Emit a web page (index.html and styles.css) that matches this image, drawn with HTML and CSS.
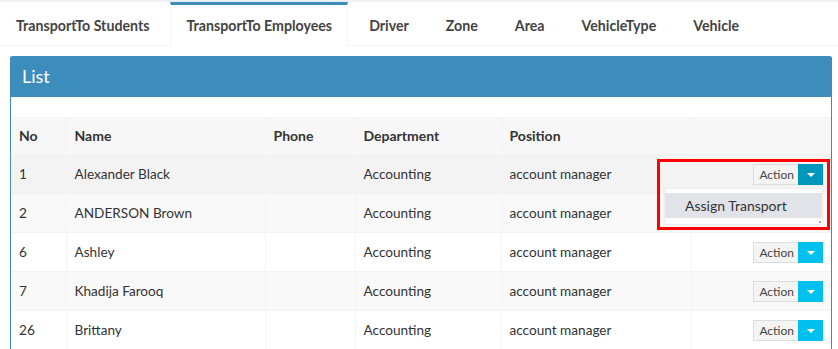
FILE: index.html
```html
<!DOCTYPE html>
<html>
<head>
<meta charset="utf-8">
<link rel="stylesheet" href="styles.css">
</head>
<body>
<div class="topstrip"></div>
<ul class="tabs">
  <li class="tab">TransportTo Students</li>
  <li class="tab active">TransportTo Employees</li>
  <li class="tab">Driver</li>
  <li class="tab">Zone</li>
  <li class="tab">Area</li>
  <li class="tab">VehicleType</li>
  <li class="tab">Vehicle</li>
</ul>
<div class="panel">
  <div class="panel-head">List</div>
  <div class="panel-tools"></div>
  <table class="grid">
    <colgroup>
      <col class="c-no"><col class="c-name"><col class="c-phone"><col class="c-dept"><col class="c-pos"><col class="c-act">
    </colgroup>
    <thead>
      <tr><th>No</th><th>Name</th><th>Phone</th><th>Department</th><th>Position</th><th></th></tr>
    </thead>
    <tbody>
      <tr class="hover">
        <td>1</td><td>Alexander Black</td><td></td><td>Accounting</td><td>account manager</td>
        <td class="act">
          <div class="btn-wrap">
            <div class="btn-group"><span class="btn-main">Action</span><span class="btn-caret open"><span class="caret"></span></span></div>
            <div class="menu"><div class="menu-item">Assign Transport</div><span class="grip"></span></div>
            <div class="highlight"></div>
          </div>
        </td>
      </tr>
      <tr class="odd">
        <td>2</td><td>ANDERSON Brown</td><td></td><td>Accounting</td><td>account manager</td><td class="act"></td>
      </tr>
      <tr>
        <td>6</td><td>Ashley</td><td></td><td>Accounting</td><td>account manager</td>
        <td class="act"><div class="btn-group"><span class="btn-main">Action</span><span class="btn-caret"><span class="caret"></span></span></div></td>
      </tr>
      <tr class="odd">
        <td>7</td><td>Khadija Farooq</td><td></td><td>Accounting</td><td>account manager</td>
        <td class="act"><div class="btn-group"><span class="btn-main">Action</span><span class="btn-caret"><span class="caret"></span></span></div></td>
      </tr>
      <tr>
        <td>26</td><td>Brittany</td><td></td><td>Accounting</td><td>account manager</td>
        <td class="act"><div class="btn-group"><span class="btn-main">Action</span><span class="btn-caret"><span class="caret"></span></span></div></td>
      </tr>
    </tbody>
  </table>
</div>
</body>
</html>
```
FILE: styles.css
```css
* { box-sizing: border-box; }
html, body { margin: 0; padding: 0; background: #fff; overflow: hidden; }
body { font-family: "Lato", "Liberation Sans", sans-serif; color: #333; font-size: 14px; }
.topstrip { height: 2px; background: #ecf0f5; }
.tabs { list-style: none; margin: 0; padding: 0; display: flex; border-bottom: 1px solid #f4f4f4; }
.tab { font-weight: bold; font-size: 14.2px; color: #444; line-height: 20px; padding: 11px 15px 9px; margin-right: 5px; border-top: 3px solid transparent; border-left: 1px solid transparent; border-right: 1px solid transparent; margin-bottom: -1px; white-space: nowrap; }
.tab.active { border-top-color: #3c8dbc; border-left-color: #f4f4f4; border-right-color: #f4f4f4; border-bottom: 1px solid #fff; }
.panel { margin: 10px 6px 0 10px; border-left: 1px solid #3c8dbc; border-right: 1px solid #3c8dbc; border-radius: 3px 3px 0 0; }
.panel-head { background: #3c8dbc; color: #fff; font-size: 18px; height: 41px; line-height: 41px; border-radius: 3px 3px 0 0; margin: 0 -1px; padding-left: 12px; }
.panel-tools { height: 20px; }
.grid { width: 100%; border-collapse: collapse; table-layout: fixed; }
.c-no { width: 55px; } .c-name { width: 199px; } .c-phone { width: 90px; } .c-dept { width: 146px; } .c-pos { width: 190px; }
.grid th, .grid td { text-align: left; border: 1px solid #f4f4f4; padding: 9px 8px; line-height: 20px; white-space: nowrap; }
.grid td { font-size: 13.6px; }
.grid th { padding: 8px; background: #f7f7f7; font-weight: bold; border-bottom: 0; }
.grid tr > *:first-child { border-left: 0; }
.grid tr > *:last-child { border-right: 0; }
.grid tbody tr.odd { background: #f9f9f9; }
.grid tbody tr.hover { background: #f3f3f3; }
.grid td.act { padding: 0 8px; text-align: right; vertical-align: middle; }
.btn-wrap { position: relative; }
.btn-group { display: inline-flex; vertical-align: middle; height: 21px; }
.btn-main { font-size: 12px; color: #444; background: #f4f4f4; border: 1px solid #ddd; border-right: 0; line-height: 19px; padding: 0 4px 0 5px; }
.btn-caret { width: 25px; background: #00c0ef; display: flex; align-items: center; justify-content: center; }
.btn-caret.open { background: #0097bc; }
.caret { width: 0; height: 0; border-left: 4px solid transparent; border-right: 4px solid transparent; border-top: 4px solid #fff; margin-top: 1px; }
.menu { position: absolute; right: 0; top: 25px; width: 159px; background: #fff; border: 1px solid #eee; border-radius: 3px; padding: 4px 0 6px; text-align: left; z-index: 2; box-shadow: 0 1px 2px rgba(0,0,0,0.05); }
.menu-item { background: #e1e3e9; color: #333; height: 25px; line-height: 25px; padding-left: 20px; font-size: 14px; }
.grip { position: absolute; right: 1px; bottom: 1px; width: 2px; height: 2px; background: #9ab; }
.highlight { position: absolute; left: -43px; right: -7px; top: -4px; height: 71px; border: 3px solid #f00; z-index: 3; pointer-events: none; }
```
